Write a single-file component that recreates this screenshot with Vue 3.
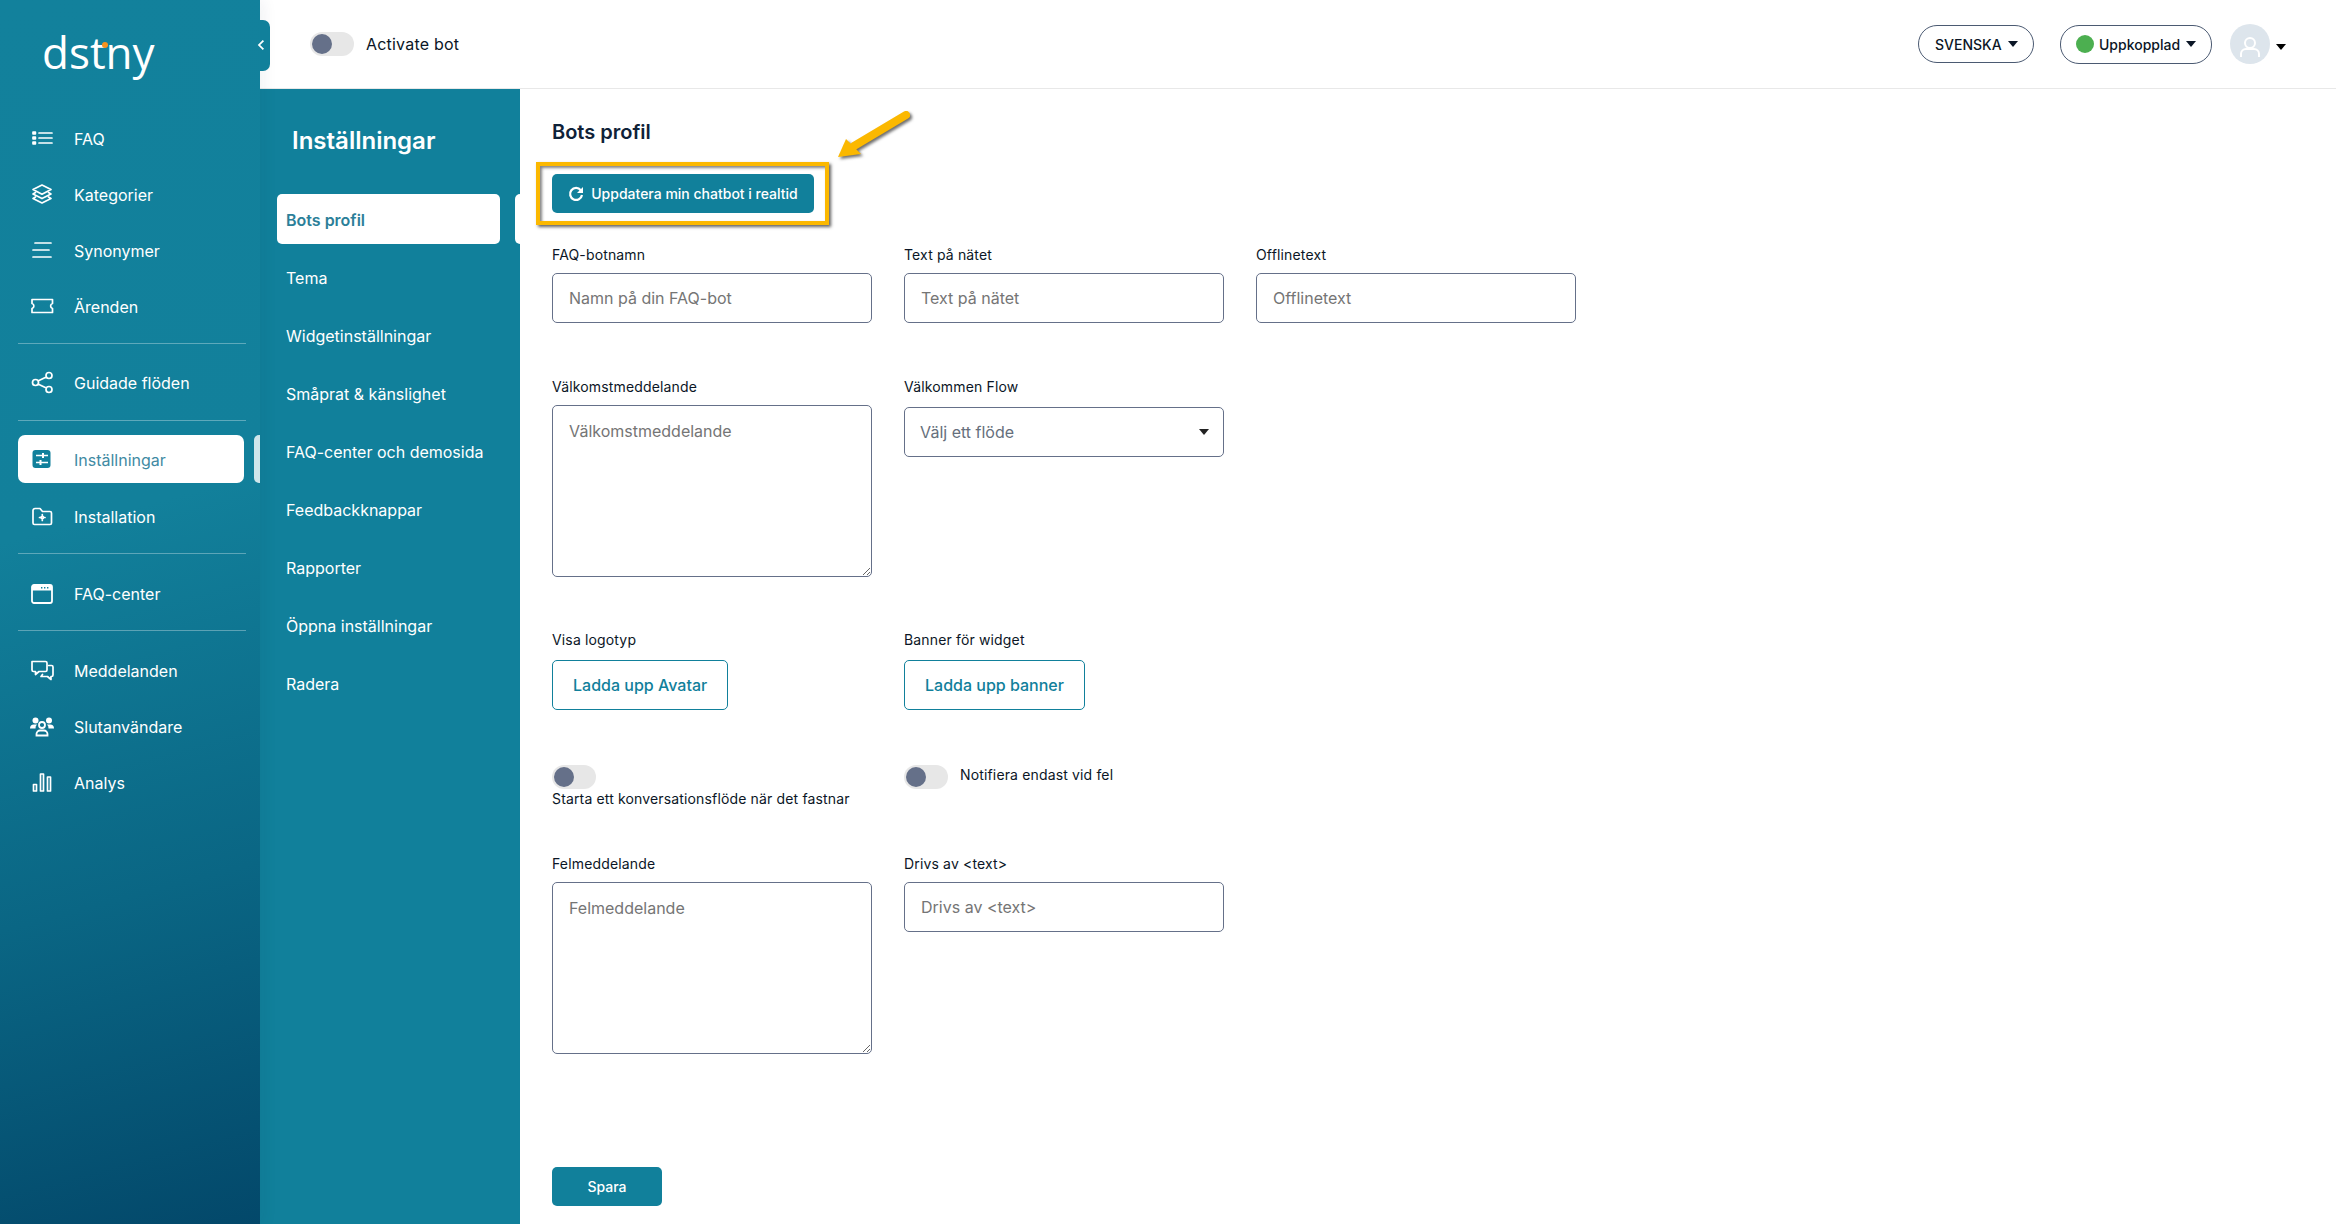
<script setup>
const line = (d) => ({ d })
const navGroups = [
  [
    { label: 'FAQ', shapes: [line('M9 7h13M9 12h13M9 17h13'), line('M3 6.200h2.400v1.600H3zM3 11.200h2.400v1.600H3zM3 16.200h2.400v1.600H3z')] },
    { label: 'Kategorier', shapes: [line('M12 3l9 4.600-9 4.600-9-4.600z'), line('M5.500 10.600L3 12l9 4.600 9-4.600-2.500-1.400'), line('M5.500 15L3 16.400 12 21l9-4.600L18.500 15')] },
    { label: 'Synonymer', shapes: [line('M5 5h16M3 12h16M3 19h18')] },
    { label: 'Ärenden', shapes: [line('M2 5.500h20.500v4a2.600 2.600 0 000 5v4H2v-4a2.600 2.600 0 000-5z')] },
  ],
  [
    { label: 'Guidade flöden', shapes: [line('M16 5.500a3 3 0 106 0 3 3 0 00-6 0zM2.500 12.500a3 3 0 106 0 3 3 0 00-6 0zM16 19.500a3 3 0 106 0 3 3 0 00-6 0zM8 11l8.300-4M8 14l8.300 4')] },
  ],
  [
    { label: 'Inställningar', active: true, filled: true },
    { label: 'Installation', shapes: [line('M3 6.500a2 2 0 012-2h5l2.500 3H20a1.500 1.500 0 011.500 1.500v10a1.500 1.500 0 01-1.500 1.500H4.500A1.500 1.500 0 013 19z'), line('M12.300 10.500v1M12.300 15.500v1M9.500 13.500h1M14 13.500h1M12.300 12.300a1.200 1.200 0 110 2.400 1.200 1.200 0 010-2.400z')] },
  ],
  [
    { label: 'FAQ-center', window: true },
  ],
  [
    { label: 'Meddelanden', shapes: [line('M2 3.500h13.500a1.500 1.500 0 011.500 1.500v7a1.500 1.500 0 01-1.500 1.500H9l-3.500 3v-3H3.500A1.500 1.500 0 012 12z'), line('M18.500 7.500h3a1.500 1.500 0 011.500 1.500v8a1.500 1.500 0 01-1.500 1.500h-.5v3l-3.500-3H11l1.500-2')] },
    { label: 'Slutanvändare', users: true },
    { label: 'Analys', shapes: [line('M3.500 14.500h3v6.500h-3zM10.500 4h3v17h-3zM17.500 7h3v14h-3z')] },
  ],
]
const subItems = ['Bots profil', 'Tema', 'Widgetinställningar', 'Småprat & känslighet', 'FAQ-center och demosida', 'Feedbackknappar', 'Rapporter', 'Öppna inställningar', 'Radera']
</script>

<template>
  <div class="app">
    <aside class="sidebar">
      <div class="logo"><span class="logo-text">dstny</span><i class="logo-dot"></i></div>
      <nav class="nav">
        <template v-for="(group, g) in navGroups" :key="g">
          <hr v-if="g" class="divider" :class="'d' + g" />
          <a v-for="item in group" :key="item.label" class="nav-item" :class="{ active: item.active }">
            <svg class="nav-icon" viewBox="0 0 24 24">
              <template v-if="item.filled">
                <rect x="2.500" y="3" width="18" height="18" rx="3" fill="#11809b" />
                <path d="M6 8.500h12M6 15.500h12" stroke="#fff" stroke-width="1.600" fill="none" />
                <path d="M13 6v5M10.500 13v5" stroke="#fff" stroke-width="2" fill="none" />
              </template>
              <template v-else-if="item.window">
                <path d="M2 6a2 2 0 012-2h16a2 2 0 012 2v14a2 2 0 01-2 2H4a2 2 0 01-2-2z" fill="none" stroke="#fff" stroke-width="1.800" />
                <path d="M2 6a2 2 0 012-2h16a2 2 0 012 2v3.500H2z" fill="#fff" />
                <path d="M14 6.800h1.400M17 6.800h1.400M11 6.800h1.400" stroke="#11809b" stroke-width="1.400" />
              </template>
              <template v-else-if="item.users">
                <circle cx="5.500" cy="6.500" r="3" fill="#fff" /><circle cx="19" cy="6.500" r="3" fill="#fff" />
                <path d="M0 14.500a4 4 0 014-4h3a5 5 0 00-1.500 4zM24 14.500a4 4 0 00-4-4h-3a5 5 0 011.500 4z" fill="#fff" />
                <circle cx="12" cy="11" r="3" fill="none" stroke="#fff" stroke-width="1.800" />
                <path d="M6.500 21.500v-1.500a3.500 3.500 0 013.500-3.500h4a3.500 3.500 0 013.500 3.500v1.500z" fill="none" stroke="#fff" stroke-width="1.800" />
              </template>
              <template v-else>
                <path v-for="s in item.shapes" :key="s.d" :d="s.d" fill="none" stroke="#fff" stroke-width="1.700" stroke-linejoin="round" stroke-linecap="round" />
              </template>
            </svg>
            <span class="nav-text">{{ item.label }}</span>
            <i v-if="item.active" class="nav-marker"></i>
          </a>
        </template>
      </nav>
      <div class="collapse-tab">
        <svg viewBox="0 0 10 14" width="8" height="12"><path d="M8 1.500L2.500 7 8 12.500" fill="none" stroke="#fff" stroke-width="2.200" /></svg>
      </div>
    </aside>

    <div class="content">
      <header class="topbar">
        <div class="bot-switch">
          <span class="toggle"><i></i></span>
          <span class="bot-label">Activate bot</span>
        </div>
        <div class="top-actions">
          <button class="pill lang">SVENSKA<i class="caret"></i></button>
          <button class="pill status"><i class="status-dot"></i>Uppkopplad<i class="caret"></i></button>
          <div class="avatar">
            <svg viewBox="0 0 40 40" width="40" height="40">
              <circle cx="20" cy="19" r="5" fill="none" stroke="#fff" stroke-width="2" />
              <path d="M11 33v-3a5 5 0 015-5h8a5 5 0 015 5v3" fill="none" stroke="#fff" stroke-width="2" />
            </svg>
          </div>
          <i class="caret avatar-caret"></i>
        </div>
      </header>

      <div class="body">
        <aside class="subnav">
          <h2>Inställningar</h2>
          <ul>
            <li v-for="(s, i) in subItems" :key="s" :class="{ current: i === 0 }">
              {{ s }}<i v-if="i === 0" class="sub-marker"></i>
            </li>
          </ul>
        </aside>

        <main class="main">
          <h1>Bots profil</h1>

          <div class="update-wrap">
            <button class="btn-primary update">
              <svg viewBox="0 0 16 16" width="16" height="16"><path d="M12.800 4.200A6 6 0 1014 9" fill="none" stroke="#fff" stroke-width="2.200" /><path d="M15 1v6h-6z" fill="#fff" /></svg>
              Uppdatera min chatbot i realtid
            </button>
            <span class="highlight"></span>
            <svg class="arrow" viewBox="0 0 84 58" width="84" height="58">
              <path d="M68 5L16 36" stroke="#fbb800" stroke-width="8" stroke-linecap="round" fill="none" />
              <path d="M0 47l8-18 15 15z" fill="#fbb800" />
            </svg>
          </div>

          <div class="row r1">
            <label class="field"><span>FAQ-botnamn</span><input placeholder="Namn på din FAQ-bot" /></label>
            <label class="field"><span>Text på nätet</span><input placeholder="Text på nätet" /></label>
            <label class="field"><span>Offlinetext</span><input placeholder="Offlinetext" /></label>
          </div>

          <div class="row r2">
            <label class="field"><span>Välkomstmeddelande</span><textarea placeholder="Välkomstmeddelande"></textarea></label>
            <div class="field"><span>Välkommen Flow</span>
              <div class="select">Välj ett flöde<i class="caret"></i></div>
            </div>
          </div>

          <div class="row r3">
            <div class="field"><span class="tight">Visa logotyp</span><button class="btn-outline">Ladda upp Avatar</button></div>
            <div class="field"><span class="tight">Banner för widget</span><button class="btn-outline">Ladda upp banner</button></div>
          </div>

          <div class="row r4">
            <div class="opt stacked"><span class="toggle"><i></i></span><span>Starta ett konversationsflöde när det fastnar</span></div>
            <div class="opt"><span class="toggle"><i></i></span><span>Notifiera endast vid fel</span></div>
          </div>

          <div class="row r5">
            <label class="field"><span>Felmeddelande</span><textarea placeholder="Felmeddelande"></textarea></label>
            <label class="field"><span>Drivs av &lt;text&gt;</span><input placeholder="Drivs av <text>" /></label>
          </div>

          <button class="btn-primary save">Spara</button>
        </main>
      </div>
    </div>
  </div>
</template>

<style>
html, body { margin: 0; background: #fff; overflow: hidden; }
</style>

<style scoped>
* { box-sizing: border-box; }
.app {
  display: flex; width: 2336px; height: 1224px; background: #fff;
  font-family: Inter, "Noto Sans", sans-serif; color: #0b1626;
}
.sidebar {
  position: relative; z-index: 2; width: 260px; flex: none; padding: 0 14px 0 18px;
  background: linear-gradient(165deg, #12819c 0%, #12809b 42%, #0a6684 72%, #03486a 100%);
  box-shadow: 4px 0 14px rgba(20, 40, 60, .06);
}
.logo { position: relative; height: 114px; padding: 22px 0 0 24px; }
.logo-text {
  font-family: "Open Sans", sans-serif; font-size: 44px; line-height: 60px; font-weight: 500;
  color: #fff;
}
.logo-dot { position: absolute; left: 84px; top: 42px; width: 6px; height: 6px; border-radius: 50%; background: #f7931e; }
.nav { display: flex; flex-direction: column; gap: 8px; }
.divider { width: 228px; height: 1px; margin: 5px 0 7px; border: 0; background: rgba(255, 255, 255, .32); }
.divider.d1 { margin: 5px 0 6px; }
.divider.d2 { margin: 6px 0 6px; }
.nav-item {
  position: relative; display: flex; align-items: center; gap: 20px; height: 48px; width: 226px;
  padding-left: 12px; border-radius: 7px; color: #fff; font-size: 16px;
}
.nav-text { padding-top: 1px; }
.nav-item.active { background: #fff; color: #3f8aa3; margin-bottom: 1px; }
.nav-icon { width: 24px; height: 24px; flex: none; }
.nav-marker {
  position: absolute; left: 236px; top: 0; width: 6px; height: 48px; border-radius: 5px 0 0 5px;
  background: rgba(255, 255, 255, .8);
}
.collapse-tab {
  position: absolute; left: 260px; top: 20px; width: 10px; height: 51px; padding-top: 19px;
  background: #11809b; border-radius: 0 7px 7px 0; line-height: 0;
}
.collapse-tab svg { margin-left: -3px; overflow: visible; }
.content { flex: 1; min-width: 0; display: flex; flex-direction: column; }
.topbar {
  height: 89px; flex: none; display: flex; align-items: center; justify-content: space-between;
  padding: 0 50px 0 50px; border-bottom: 1px solid #e8e8e8;
}
.bot-switch { display: flex; align-items: center; gap: 12px; }
.bot-label { font-size: 16px; color: #0b1626; letter-spacing: .2px; }
.toggle {
  display: inline-flex; align-items: center; width: 44px; height: 24px; padding-left: 2px; flex: none;
  background: #e7e7e7; border-radius: 12px;
}
.toggle i { width: 20px; height: 20px; border-radius: 50%; background: #657089; }
.top-actions { display: flex; align-items: center; }
.pill {
  display: flex; align-items: center; height: 38px; border: 1px solid #4b5a72; border-radius: 19px;
  background: #fff; color: #0b1626; font: 500 14px Inter, sans-serif; padding: 0; white-space: nowrap;
}
.lang { width: 116px; padding-left: 16px; margin-right: 26px; }
.status { width: 152px; height: 39px; padding-left: 15px; margin-right: 18px; }
.status-dot { width: 18px; height: 18px; margin-right: 5px; border-radius: 50%; background: #4caf50; }
.caret {
  display: inline-block; width: 0; height: 0; margin-left: 6px;
  border-left: 5px solid transparent; border-right: 5px solid transparent; border-top: 6px solid #0b1626;
}
.avatar { width: 40px; height: 40px; border-radius: 50%; background: #dde5ec; overflow: hidden; }
.avatar-caret { margin-left: 6px; margin-top: 6px; border-top-color: #000; }
.body { flex: 1; display: flex; min-height: 0; }
.subnav { width: 260px; flex: none; background: #11809b; color: #fff; padding: 37px 0 0 17px; position: relative; }
.subnav h2 { margin: 0 0 38px 15px; font-size: 24px; line-height: 30px; font-weight: 600; }
.subnav ul { margin: 0; padding: 0; list-style: none; display: flex; flex-direction: column; gap: 8px; }
.subnav li {
  position: relative; display: flex; align-items: center; width: 223px; height: 50px; padding: 1px 0 0 9px;
  border-radius: 5px; font-size: 16px; white-space: nowrap;
}
.subnav li.current { background: #fff; color: #2c7f99; font-weight: 600; }
.sub-marker { position: absolute; left: 238px; top: 0; width: 5px; height: 50px; border-radius: 5px 0 0 5px; background: #fff; }
.main { flex: 1; padding: 29px 0 0 32px; min-width: 0; }
.main h1 { margin: 0 0 28px; font-size: 20px; line-height: 28px; font-weight: 600; color: #0f2238; }
.update-wrap { position: relative; width: 262px; height: 39px; }
.btn-primary {
  border: 0; border-radius: 5px; background: #11809b; color: #fff;
  font: 500 14px Inter, sans-serif;
}
.update { display: flex; align-items: center; justify-content: center; gap: 7px; width: 262px; height: 39px; white-space: nowrap; }
.highlight {
  position: absolute; left: -16px; top: -12px; width: 293px; height: 63px;
  border: 4px solid #fbb800; box-shadow: 2px 2px 3px rgba(30, 30, 30, .7), inset 2px 2px 3px rgba(30, 30, 30, .55);
}
.arrow { position: absolute; left: 286px; top: -64px; overflow: visible; filter: drop-shadow(2px 2px 1.500px rgba(30, 30, 30, .65)); }
.row { display: flex; gap: 32px; }
.r1 { margin-top: 32px; }
.r2 { margin-top: 54px; }
.r3 { margin-top: 53px; }
.r4 { margin-top: 55px; }
.r5 { margin-top: 45px; }
.field { display: flex; flex-direction: column; align-items: flex-start; width: 320px; }
.field > span { height: 28px; font-size: 14px; line-height: 20px; font-weight: 400; letter-spacing: .15px; color: #0b1626; }
.field > span.tight { height: 30px; }
input, textarea, .select {
  display: block; width: 320px; border: 1px solid #657089; border-radius: 5px; background: #fff;
  font: 400 16px Inter, sans-serif; color: #0b1626; outline: 0;
}
input { height: 50px; padding: 0 16px; }
textarea { height: 172px; padding: 15px 16px; margin: 0; line-height: 20px; resize: vertical; }
input::placeholder, textarea::placeholder { color: #757575; opacity: 1; }
.select {
  display: flex; align-items: center; justify-content: space-between; height: 50px; margin-top: 2px;
  padding: 0 14px 0 15px; color: #666f7c;
}
.select .caret { border-top-color: #222; }
.btn-outline {
  height: 50px; padding: 0 20px; background: #fff; border: 1px solid #11809b; border-radius: 5px;
  color: #11809b; font: 500 16px Inter, sans-serif; white-space: nowrap;
}
.opt { display: flex; gap: 12px; width: 320px; font-size: 14px; line-height: 20px; font-weight: 400; letter-spacing: .15px; color: #0b1626; }
.opt.stacked { flex-direction: column; gap: 0; }
.save { display: block; width: 110px; height: 39px; margin-top: 113px; }
</style>
